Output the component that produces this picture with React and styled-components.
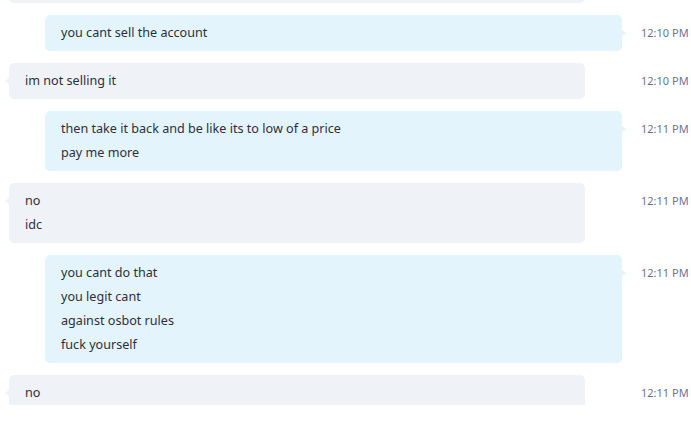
import React from "react";
import styled, { createGlobalStyle } from "styled-components";

const Global = createGlobalStyle`
  html, body { margin: 0; padding: 0; background: #ffffff; }
  body { font-family: "Segoe UI", "Noto Sans", "Open Sans", sans-serif; }
`;

const SENT_BG = "#e3f4fc";
const RECV_BG = "#eff2f7";

const Viewport = styled.div`
  height: 405px;
  overflow: hidden;
  width: 691px;
`;

const List = styled.div`
  display: flex;
  flex-direction: column;
  gap: 12px;
  margin-top: -33px;
`;

const Row = styled.div`
  display: grid;
  grid-template-columns: 622px 1fr;
`;

const BubbleWrap = styled.div`
  padding-left: ${(p) => (p.$sent ? "45px" : "9px")};
  padding-right: ${(p) => (p.$sent ? "0" : "37px")};
`;

const Bubble = styled.div`
  position: relative;
  background: ${(p) => (p.$sent ? SENT_BG : RECV_BG)};
  border-radius: 5px;
  padding: 6px 16px;
  color: #2f2f3a;
  font-family: "Noto Sans", sans-serif;
  font-size: 12.6px;
  line-height: 24px;
`;

const Line = styled.div`
  white-space: nowrap;
  min-height: 24px;
`;

const Tail = styled.svg`
  position: absolute;
  top: 11px;
  ${(p) => (p.$sent ? "right: -5px;" : "left: -5px; transform: scaleX(-1);")}
  width: 6px;
  height: 14px;
  display: block;
`;

const Time = styled.div`
  padding-top: 6px;
  padding-left: 19px;
  font-size: 11px;
  line-height: 24px;
  color: #6b7489;
  white-space: nowrap;
`;

const messages = [
  { sent: false, time: "", lines: [""] },
  { sent: true, time: "12:10 PM", lines: ["you cant sell the account"] },
  { sent: false, time: "12:10 PM", lines: ["im not selling it"] },
  {
    sent: true,
    time: "12:11 PM",
    lines: ["then take it back and be like its to low of a price", "pay me more"],
  },
  { sent: false, time: "12:11 PM", lines: ["no", "idc"] },
  {
    sent: true,
    time: "12:11 PM",
    lines: ["you cant do that", "you legit cant", "against osbot rules", "fuck yourself"],
  },
  { sent: false, time: "12:11 PM", lines: ["no"] },
];

function Message({ sent, time, lines }) {
  return (
    <Row>
      <BubbleWrap $sent={sent}>
        <Bubble $sent={sent}>
          <Tail $sent={sent} viewBox="0 0 6 14">
            <path
              d="M0 0 C0.5 3.5 1.5 5 5.5 7 C1.5 9 0.5 10.5 0 14 Z"
              fill={sent ? SENT_BG : RECV_BG}
            />
          </Tail>
          {lines.map((l, i) => (
            <Line key={i}>{l}</Line>
          ))}
        </Bubble>
      </BubbleWrap>
      <Time>{time}</Time>
    </Row>
  );
}

export default function App() {
  return (
    <>
      <Global />
      <Viewport>
        <List>
          {messages.map((m, i) => (
            <Message key={i} {...m} />
          ))}
        </List>
      </Viewport>
    </>
  );
}
